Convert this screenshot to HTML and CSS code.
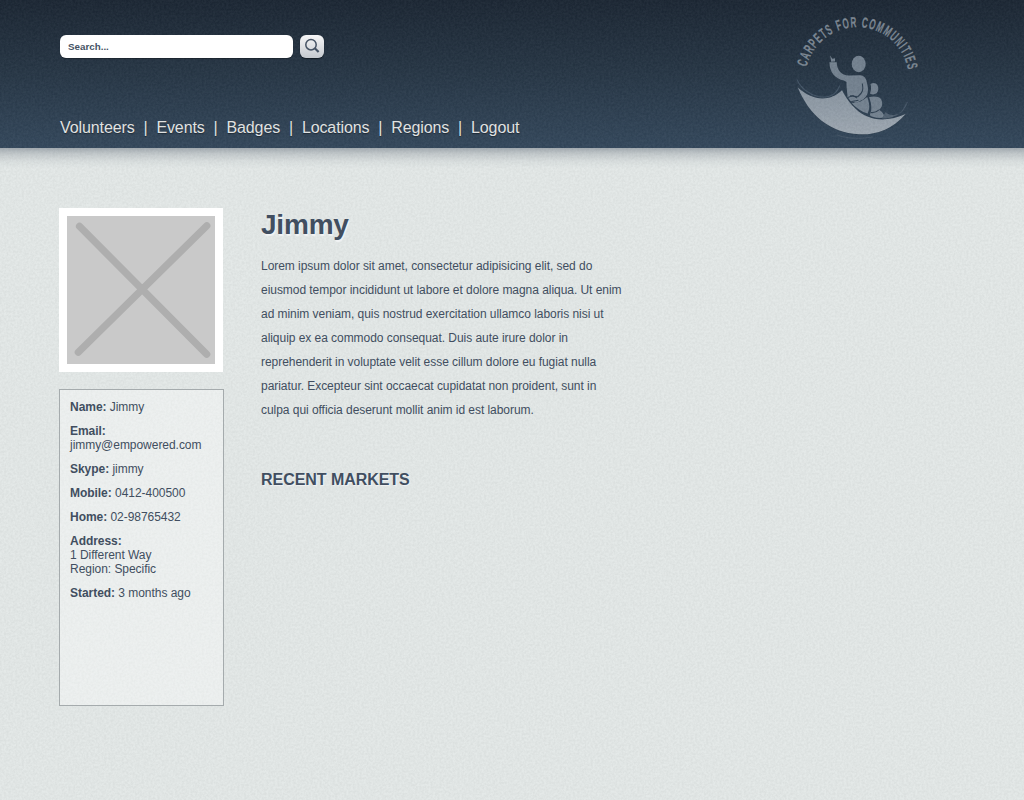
FILE: index.html
```html
<!DOCTYPE html>
<html lang="en">
<head>
<meta charset="utf-8">
<title>Carpets for Communities</title>
<link rel="stylesheet" href="styles.css">
</head>
<body>
<header class="header">
  <div class="header-main">
    <form class="search">
      <input class="search-input" type="text" placeholder="Search..." aria-label="Search">
      <button class="search-button" type="button" aria-label="Search">
        <svg width="24" height="23" viewBox="0 0 24 23" fill="none" stroke="#465364">
          <circle cx="11" cy="9.7" r="5.2" stroke-width="1.5"/>
          <path d="M14.8 13.3L18.6 17" stroke-width="2.2"/>
        </svg>
      </button>
    </form>
    <nav class="nav">
      <a>Volunteers</a><i>|</i><a>Events</a><i>|</i><a>Badges</a><i>|</i><a>Locations</a><i>|</i><a>Regions</a><i>|</i><a>Logout</a>
    </nav>
  </div>
  <svg class="logo" width="160" height="148" viewBox="0 0 160 148">
    <defs>
      <path id="arc" d="M26.6 67A51.8 51.8 0 0 1 128 70L130 84"/>
      <linearGradient id="rug" x1="0" y1="0" x2="0" y2="1"><stop offset="0" stop-color="#8894a0"/><stop offset="1" stop-color="#9ea8b2"/></linearGradient>
    </defs>
    <text class="logo-text"><textPath href="#arc" textLength="142" lengthAdjust="spacingAndGlyphs">CARPETS FOR COMMUNITIES</textPath></text>
    <g fill="#748290">
      <ellipse cx="78.7" cy="64" rx="7" ry="8.3"/>
      <path d="M49.4 62.3L56.7 62.2C57 70 61 75.3 69 75.6L80 75.2C84 75.4 86 78 86.8 82C89.2 91 88 96 83 99.5L76 103L70.5 101L67.5 97C67.2 91 66.3 87 66.5 82L64 80.5C55 79 49.5 72 49.4 62.3Z"/>
      <path d="M50.1 55.6L52.4 58.7L55 58.3L55 61.6L51.2 61.8Z"/>
      <path d="M71.5 102.8C77 103.3 82 101.5 87.3 97C89 102 90.5 108 87.6 113.6C82 112 76 108 71.5 102.8Z"/>
      <path d="M90.5 84C95.5 81.2 98.8 85 98.3 90C97.6 94 93.4 95.6 90 93.4C91.3 90 91.3 87 90.5 84Z"/>
      <path d="M89 97.3C93 96 98.6 96.2 101 99C103 103 102.8 107 99 109.8C102.2 111.6 104.2 114 104.3 117.5C99 118.7 93 117.5 89.8 115.2C92.6 109 91 102 89 97.3Z"/>
    </g>
    <g fill="none" stroke="#304152" stroke-width="1.1">
      <path d="M82.3 83.5C83.6 90 82.8 92.7 77.7 96.7L70 95.9"/>
      <path d="M67.8 97.5L73 95.5L77 98M71.5 101.5L78.5 100.2"/>
      <path d="M91 112.5C94.5 113 97 111.5 99 109.8"/>
    </g>
    <path fill="url(#rug)" stroke="#304152" stroke-width="1.4" paint-order="stroke" d="M17.8 87.6C31 99.5 48 103.5 62 90.3C71 107 88 130 125.7 114C111 130.5 95 135 79 134.3C50 133 29 115 17.8 87.6Z"/>
    <path fill="#526272" d="M102 118.5C103 116 104.5 114 105.7 112C109 116 114 115.5 120.5 113.2C114 117 108 119 102 118.5Z"/>
    <g fill="none" stroke="#435466" stroke-width="1.2" stroke-linecap="round">
      <path d="M17.2 80C24 96 52 106 59.5 86"/>
      <path d="M120 113C123.5 110.5 125.5 106 127.2 102.5"/>
      <path d="M57 135C68 138.8 80 139 92 137"/>
    </g>
  </svg>
</header>
<svg class="grain" width="1024" height="800">
  <filter id="noise" x="0" y="0" width="100%" height="100%" color-interpolation-filters="sRGB">
    <feTurbulence type="fractalNoise" baseFrequency="0.45" numOctaves="3" seed="4"/>
    <feColorMatrix values="2 0 0 0 -0.5  2 0 0 0 -0.5  2 0 0 0 -0.5  0 0 0 0 1"/>
  </filter>
  <rect width="1024" height="800" filter="url(#noise)"/>
</svg>
<main class="content">
  <aside class="sidebar">
    <div class="photo">
      <svg width="148" height="148" viewBox="0 0 148 148" stroke="#aeaeae" stroke-width="7.2" stroke-linecap="round">
        <path d="M12.5 10.3L139.7 138.2M139.8 9.7L11.3 136.3"/>
      </svg>
    </div>
    <div class="details">
      <p><b>Name:</b> Jimmy</p>
      <p><b>Email:</b><br>jimmy@empowered.com</p>
      <p><b>Skype:</b> jimmy</p>
      <p><b>Mobile:</b> 0412-400500</p>
      <p><b>Home:</b> 02-98765432</p>
      <p><b>Address:</b><br>1 Different Way<br>Region: Specific</p>
      <p><b>Started:</b> 3 months ago</p>
    </div>
  </aside>
  <section class="profile">
    <h1>Jimmy</h1>
    <p>Lorem ipsum dolor sit amet, consectetur adipisicing elit, sed do<br>eiusmod tempor incididunt ut labore et dolore magna aliqua. Ut enim<br>ad minim veniam, quis nostrud exercitation ullamco laboris nisi ut<br>aliquip ex ea commodo consequat. Duis aute irure dolor in<br>reprehenderit in voluptate velit esse cillum dolore eu fugiat nulla<br>pariatur. Excepteur sint occaecat cupidatat non proident, sunt in<br>culpa qui officia deserunt mollit anim id est laborum.</p>
    <h2>RECENT MARKETS</h2>
  </section>
</main>
</body>
</html>
```
FILE: styles.css
```css
* { box-sizing: border-box; }
body {
  margin: 0;
  height: 800px;
  overflow: hidden;
  position: relative;
  background: #e4e9e8;
  color: #414e60;
  font: 12px/14px "Liberation Sans", Arial, sans-serif;
}
p, h1, h2 { margin: 0; }
.header {
  display: flex;
  justify-content: space-between;
  height: 148px;
  padding: 0 84px 0 60px;
  background: linear-gradient(#1c2734, #263544 45%, #34485c);
}
.header-main {
  display: flex;
  flex-direction: column;
  justify-content: space-between;
  position: relative;
  z-index: 2;
  padding: 35px 0 10px;
}
.search { display: flex; gap: 7px; }
.search-input {
  width: 233px;
  height: 23px;
  padding: 0 8px;
  border: 0;
  border-radius: 6px;
  background: #fff;
  box-shadow: 0 1px 1px rgba(0, 0, 0, .3);
  font: bold 9.8px "Liberation Sans", Arial, sans-serif;
}
.search-input::placeholder { color: #465364; opacity: 1; }
.search-button {
  display: block;
  width: 24px;
  height: 23px;
  padding: 0;
  border: 0;
  border-radius: 6px;
  background: linear-gradient(#f7f7f8, #c5c9ce);
  box-shadow: 0 1px 1px rgba(0, 0, 0, .5);
}
.search-button svg { display: block; }
.nav {
  display: flex;
  gap: 8.85px;
  color: #e0e2e2;
  font-size: 16px;
  line-height: 20px;
  letter-spacing: -.1px;
  text-shadow: 0 1px 1px rgba(0, 0, 0, .4);
}
.nav i { font-style: normal; }
.logo { display: block; }
.logo-text {
  fill: #7c8793;
  stroke: #7c8793;
  stroke-width: .2px;
  font: bold 14.8px "Liberation Sans Narrow", "Liberation Sans", Arial, sans-serif;
  letter-spacing: 1.8px;
  word-spacing: 1px;
}
.content {
  display: flex;
  gap: 37px;
  position: relative;
  padding: 60px 0 0 59px;
  background: linear-gradient(rgba(50, 63, 80, .36), rgba(50, 63, 80, .18) 6px, rgba(50, 63, 80, .06) 13px, rgba(50, 63, 80, 0) 20px);
}
.sidebar { width: 165px; }
.photo {
  width: 164px;
  height: 164px;
  padding: 8px;
  background: #fff;
}
.photo svg { display: block; background: #c9c9c9; }
.details {
  display: flex;
  flex-direction: column;
  gap: 10px;
  height: 317px;
  margin-top: 17px;
  padding: 10px;
  border: 1px solid #a5abad;
  background: rgba(255, 255, 255, .35);
  letter-spacing: -.04px;
}
.profile { padding-top: 1px; }
.profile h1 {
  font-size: 28px;
  line-height: 32px;
  letter-spacing: -.2px;
  text-shadow: 1px 2px 1px #f1f3f4;
}
.profile p {
  margin-top: 13px;
  line-height: 24px;
  letter-spacing: -.045px;
  white-space: nowrap;
}
.profile h2 {
  margin-top: 48px;
  font-size: 16px;
  line-height: 20px;
  letter-spacing: -.05px;
  text-shadow: 1px 1px 1px #f1f3f4;
}
.grain {
  position: absolute;
  inset: 0;
  pointer-events: none;
  opacity: .03;
}
```
